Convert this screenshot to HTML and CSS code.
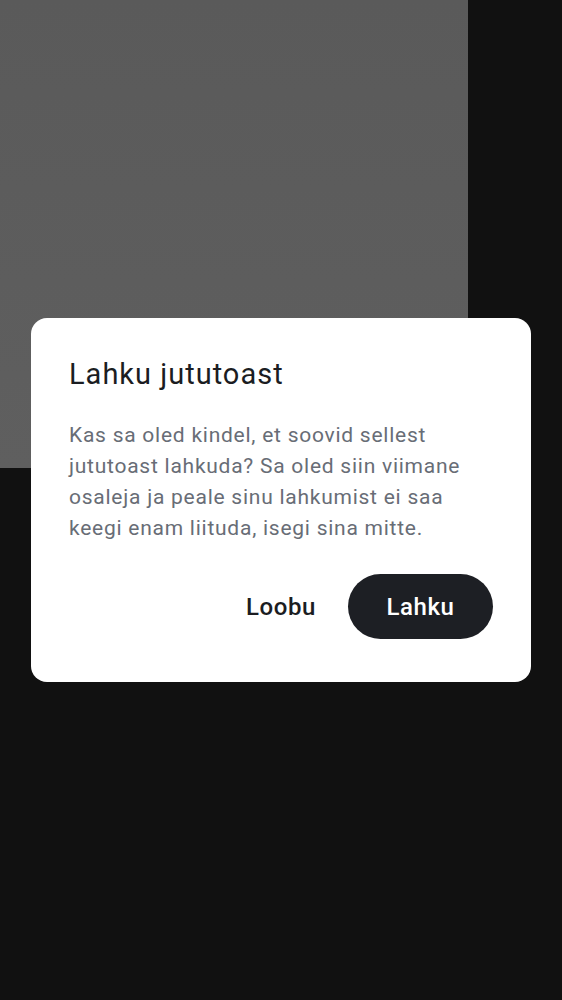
FILE: index.html
```html
<!DOCTYPE html>
<html lang="et">
<head>
  <meta charset="UTF-8">
  <title>Lahku jututoast</title>
  <meta name="viewport" content="width=device-width, initial-scale=1">
  <link rel="stylesheet" href="styles.css">
</head>
<body>
  <div class="video-tile"></div>

  <div class="dialog">
    <h2 class="dialog-title">Lahku jututoast</h2>
    <p class="dialog-text">Kas sa oled kindel, et soovid sellest jututoast lahkuda? Sa oled siin viimane osaleja ja peale sinu lahkumist ei saa keegi enam liituda, isegi sina mitte.</p>
    <div class="dialog-actions">
      <button class="btn btn-text">Loobu</button>
      <button class="btn btn-primary">Lahku</button>
    </div>
  </div>
</body>
</html>
```

FILE: styles.css
```css
body {
  margin: 0;
  height: 1000px;
  background: #111111;
  font-family: Roboto, 'Noto Sans', sans-serif;
  position: relative;
  overflow: hidden;
}

.video-tile {
  width: 468px;
  height: 468px;
  background: linear-gradient(180deg, #5a5a5a, #5f5f5f);
}

.dialog {
  position: absolute;
  top: 318px;
  left: 31px;
  width: 500px;
  box-sizing: border-box;
  padding: 38px 38px 43px;
  background: #ffffff;
  border-radius: 16px;
}

.dialog-title {
  margin: 0;
  font-size: 29px;
  line-height: 36px;
  font-weight: 400;
  letter-spacing: 1px;
  color: #1b1d22;
}

.dialog-text {
  margin: 28px 0 0;
  font-size: 21px;
  line-height: 31px;
  letter-spacing: 0.75px;
  color: #686d76;
}

.dialog-actions {
  display: flex;
  justify-content: flex-end;
  align-items: center;
  gap: 16px;
  margin-top: 30px;
}

.btn {
  height: 65px;
  border: none;
  border-radius: 33px;
  font-family: inherit;
  font-size: 24px;
  font-weight: 500;
  letter-spacing: 0.6px;
  cursor: pointer;
}

.btn-text {
  padding: 0 16px;
  background: none;
  color: #1b1d22;
}

.btn-primary {
  width: 145px;
  background: #1d1f24;
  color: #ffffff;
}
```
